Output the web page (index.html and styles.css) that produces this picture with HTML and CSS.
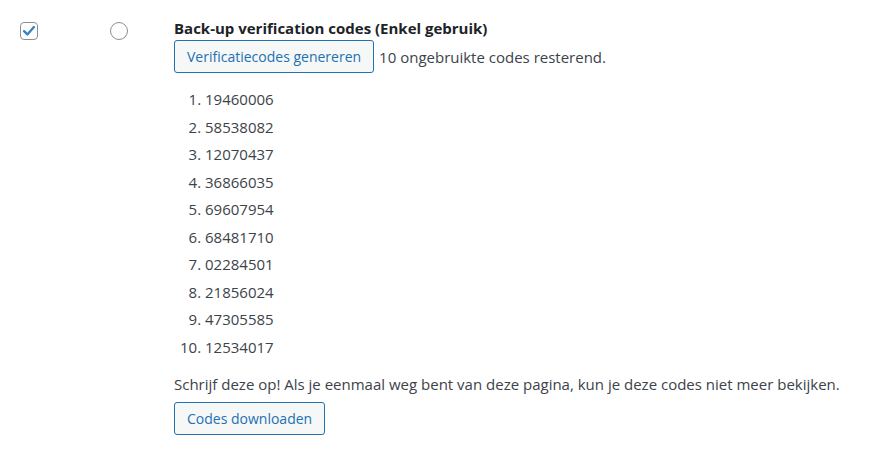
FILE: index.html
```html
<!DOCTYPE html>
<html lang="nl">
<head>
<meta charset="utf-8">
<link rel="stylesheet" href="styles.css">
</head>
<body>
<div class="row">
  <div class="cell-check">
    <span class="checkbox">
      <svg viewBox="0 0 20 20" width="18" height="18"><path d="M4.5 10.2 L8.2 13.8 L15.5 5.6" fill="none" stroke="#3582c4" stroke-width="2.6" stroke-linecap="round" stroke-linejoin="round"/></svg>
    </span>
  </div>
  <div class="cell-radio"><span class="radio"></span></div>
  <div class="content">
    <div class="title">Back-up verification codes (Enkel gebruik)</div>
    <div class="gen-line">
      <button class="btn">Verificatiecodes genereren</button>
      <span class="remaining">10 ongebruikte codes resterend.</span>
    </div>
    <ol class="codes">
      <li>19460006</li>
      <li>58538082</li>
      <li>12070437</li>
      <li>36866035</li>
      <li>69607954</li>
      <li>68481710</li>
      <li>02284501</li>
      <li>21856024</li>
      <li>47305585</li>
      <li>12534017</li>
    </ol>
    <p class="note">Schrijf deze op! Als je eenmaal weg bent van deze pagina, kun je deze codes niet meer bekijken.</p>
    <button class="btn">Codes downloaden</button>
  </div>
</div>
</body>
</html>
```

FILE: styles.css
```css
html, body {
  margin: 0;
  padding: 0;
  background: #ffffff;
}
body {
  font-family: "Open Sans", "Noto Sans", sans-serif;
  font-size: 15px;
  color: #3c434a;
}
.row {
  display: flex;
  align-items: flex-start;
  padding-top: 22px;
}
.cell-check {
  width: 110px;
  padding-left: 20px;
  box-sizing: border-box;
}
.checkbox {
  display: block;
  width: 18px;
  height: 18px;
  box-sizing: border-box;
  border: 1px solid #8c8f94;
  border-radius: 4px;
  background: #fff;
  position: relative;
}
.checkbox svg {
  position: absolute;
  left: -1px;
  top: -1px;
}
.cell-radio {
  width: 64px;
}
.radio {
  display: block;
  width: 18px;
  height: 18px;
  box-sizing: border-box;
  border: 1px solid #8c8f94;
  border-radius: 50%;
  background: #fff;
}
.content {
  margin-top: -5px;
}
.title {
  font-weight: 700;
  font-size: 15px;
  color: #1d2327;
  line-height: 22px;
}
.gen-line {
  display: flex;
  align-items: center;
  gap: 5px;
  margin-top: 1px;
}
.btn {
  font-family: inherit;
  font-size: 14px;
  color: #2271b1;
  background: #f6f7f7;
  border: 1px solid #2271b1;
  border-radius: 3px;
  height: 33px;
  padding: 0 12px;
  cursor: pointer;
}
.remaining {
  font-size: 15px;
}
.codes {
  margin: 13px 0 0 0;
  padding-left: 31px;
  font-size: 15px;
  line-height: 27.5px;
}
.note {
  margin: 12px 0 7px 0;
  font-size: 15px;
  line-height: 22px;
}
```
